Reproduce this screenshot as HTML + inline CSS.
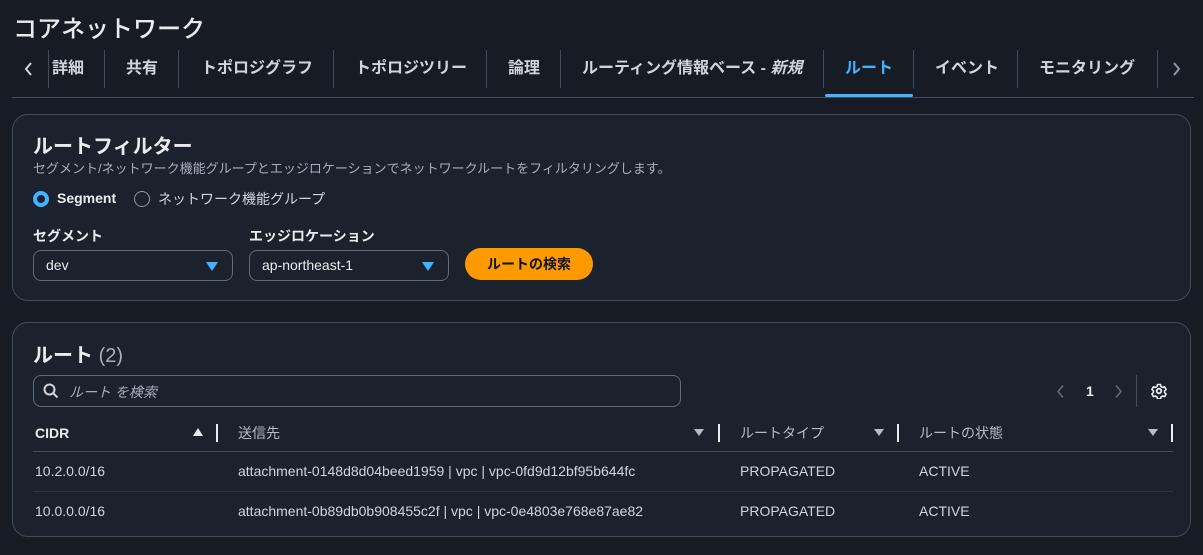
<!DOCTYPE html>
<html><head><meta charset="utf-8"><style>
*{box-sizing:border-box;margin:0;padding:0}
body{width:1203px;height:555px;background:#161b24;color:#e9ebed;font-family:"Liberation Sans","Noto Sans CJK JP",sans-serif;position:relative;overflow:hidden}
.a{position:absolute;white-space:nowrap}
h1{position:absolute;left:13px;top:9px;font-size:24px;font-weight:500;color:#e9ebed}
.tab{position:absolute;top:58px;line-height:22px;font-size:16px;font-weight:bold;color:#d1d5db}
.div{position:absolute;top:50px;width:1px;height:38px;background:#414d5c}
.card{position:absolute;left:12px;width:1179px;background:#1b222d;border:1px solid #414d5c;border-radius:16px}
.gray{color:#a4afbd}
.sel{position:absolute;top:250px;height:31px;width:200px;border:1px solid #5f6b7a;border-radius:8px;font-size:14px;padding:6px 12px}
.tri{position:absolute;right:14px;top:11px;width:0;height:0;border-left:6px solid transparent;border-right:6px solid transparent;border-top:9px solid #42b4ff}
.th{position:absolute;top:425px;line-height:16px;font-size:14px;font-weight:bold;color:#e9ebed}
.th.g{font-weight:normal;color:#b4bcc5}
.bar{position:absolute;top:424px;width:2px;height:18px;background:#e9ebed}
.ft{position:absolute;top:429px;width:0;height:0;border-left:5px solid transparent;border-right:5px solid transparent;border-top:7px solid #b4bcc5}
.hl{position:absolute;left:33px;width:1140px;height:1px;background:#414d5c}
.td{position:absolute;font-size:14px;color:#d1d5db}
</style></head><body>
<h1>コアネットワーク</h1>
<svg class="a" style="left:23px;top:61px" width="12" height="16" viewBox="0 0 12 16"><path d="M8 2L3 8l5 6" fill="none" stroke="#d1d5db" stroke-width="2"/></svg>
<div class="div" style="left:48px"></div>
<div class="tab" style="left:52px">詳細</div>
<div class="div" style="left:104px"></div>
<div class="tab" style="left:126px">共有</div>
<div class="div" style="left:178px"></div>
<div class="tab" style="left:201px">トポロジグラフ</div>
<div class="div" style="left:333px"></div>
<div class="tab" style="left:355px">トポロジツリー</div>
<div class="div" style="left:486px"></div>
<div class="tab" style="left:508px">論理</div>
<div class="div" style="left:560px"></div>
<div class="tab" style="left:582px">ルーティング情報ベース - <i>新規</i></div>
<div class="div" style="left:823px"></div>
<div class="tab" style="left:845px;color:#42b4ff">ルート</div>
<div class="div" style="left:913px"></div>
<div class="tab" style="left:935px">イベント</div>
<div class="div" style="left:1017px"></div>
<div class="tab" style="left:1039px">モニタリング</div>
<div class="div" style="left:1157px"></div>
<svg class="a" style="left:1170px;top:61px" width="12" height="16" viewBox="0 0 12 16"><path d="M4 2l5 6-5 6" fill="none" stroke="#8d99a8" stroke-width="2"/></svg>
<div class="a" style="left:12px;top:97px;width:1182px;height:1px;background:#414d5c"></div>
<div class="a" style="left:825px;top:94px;width:88px;height:3px;background:#42b4ff;border-radius:2px"></div>

<div class="card" style="top:114px;height:187px"></div>
<div class="a" style="left:33px;top:130px;font-size:20px;font-weight:bold">ルートフィルター</div>
<div class="a gray" style="left:33px;top:158px;font-size:13px">セグメント/ネットワーク機能グループとエッジロケーションでネットワークルートをフィルタリングします。</div>
<div class="a" style="left:33px;top:191px;width:16px;height:16px;border-radius:50%;border:4px solid #42b4ff;background:#1b222d"></div>
<div class="a" style="left:57px;top:190px;font-size:14px;font-weight:bold">Segment</div>
<div class="a" style="left:134px;top:191px;width:16px;height:16px;border-radius:50%;border:1.5px solid #8d99a8"></div>
<div class="a" style="left:158px;top:189px;font-size:14px;color:#d1d5db">ネットワーク機能グループ</div>
<div class="a" style="left:33px;top:226px;font-size:14px;font-weight:bold">セグメント</div>
<div class="a" style="left:249px;top:226px;font-size:14px;font-weight:bold">エッジロケーション</div>
<div class="sel" style="left:33px">dev<div class="tri"></div></div>
<div class="sel" style="left:249px">ap-northeast-1<div class="tri"></div></div>
<div class="a" style="left:465px;top:248px;width:128px;height:32px;border-radius:16px;background:#ff9900;color:#0f141a;font-size:14px;font-weight:bold;text-align:center;line-height:32px">ルートの検索</div>

<div class="card" style="top:322px;height:215px"></div>
<div class="a" style="left:33px;top:339px;font-size:20px;font-weight:bold">ルート <span style="font-weight:normal;color:#a4afbd">(2)</span></div>
<div class="a" style="left:33px;top:375px;width:648px;height:32px;border:1px solid #5f6b7a;border-radius:8px"></div>
<svg class="a" style="left:43px;top:383px" width="16" height="16" viewBox="0 0 16 16"><circle cx="6.5" cy="6.5" r="5" fill="none" stroke="#d1d5db" stroke-width="2"/><path d="M10 10l4.5 4.5" stroke="#d1d5db" stroke-width="2"/></svg>
<div class="a" style="left:69px;top:382px;font-size:14px;font-style:italic;color:#a4afbd">ルート を検索</div>
<svg class="a" style="left:1056px;top:384px" width="10" height="15" viewBox="0 0 10 15"><path d="M7 1.5L2 7.5l5 6" fill="none" stroke="#5f6b7a" stroke-width="1.6"/></svg>
<div class="a" style="left:1086px;top:383px;font-size:14px;font-weight:bold">1</div>
<svg class="a" style="left:1113px;top:384px" width="10" height="15" viewBox="0 0 10 15"><path d="M3 1.5l5 6-5 6" fill="none" stroke="#5f6b7a" stroke-width="1.6"/></svg>
<div class="a" style="left:1136px;top:375px;width:1px;height:32px;background:#414d5c"></div>
<svg class="a" style="left:1151px;top:383px" width="16" height="16" viewBox="0 0 16 16"><circle cx="8" cy="8" r="2.3" fill="none" stroke="#e9ebed" stroke-width="1.8"/><path d="M6.5 1.5h3l.5 2 1.6.9 2-.6 1.5 2.6-1.5 1.4v1.8l1.5 1.4-1.5 2.6-2-.6-1.6.9-.5 2h-3l-.5-2-1.6-.9-2 .6L.9 11l1.5-1.4V7.8L.9 6.4 2.4 3.8l2 .6L6 3.5z" fill="none" stroke="#e9ebed" stroke-width="1.6" stroke-linejoin="round"/></svg>

<div class="th" style="left:35px">CIDR</div>
<div class="a" style="left:193px;top:428px;width:0;height:0;border-left:5px solid transparent;border-right:5px solid transparent;border-bottom:8px solid #e9ebed"></div>
<div class="bar" style="left:216px"></div>
<div class="th g" style="left:238px">送信先</div>
<div class="ft" style="left:694px"></div><div class="bar" style="left:718px"></div>
<div class="th g" style="left:740px">ルートタイプ</div>
<div class="ft" style="left:874px"></div><div class="bar" style="left:897px"></div>
<div class="th g" style="left:919px">ルートの状態</div>
<div class="ft" style="left:1148px"></div><div class="bar" style="left:1171px"></div>
<div class="hl" style="top:451px"></div>
<div class="hl" style="top:491px;background:#2c3542"></div>
<div class="td" style="left:35px;top:463px">10.2.0.0/16</div>
<div class="td" style="left:238px;top:463px">attachment-0148d8d04beed1959 | vpc | vpc-0fd9d12bf95b644fc</div>
<div class="td" style="left:740px;top:463px">PROPAGATED</div>
<div class="td" style="left:919px;top:463px">ACTIVE</div>
<div class="td" style="left:35px;top:503px">10.0.0.0/16</div>
<div class="td" style="left:238px;top:503px">attachment-0b89db0b908455c2f | vpc | vpc-0e4803e768e87ae82</div>
<div class="td" style="left:740px;top:503px">PROPAGATED</div>
<div class="td" style="left:919px;top:503px">ACTIVE</div>
</body></html>
